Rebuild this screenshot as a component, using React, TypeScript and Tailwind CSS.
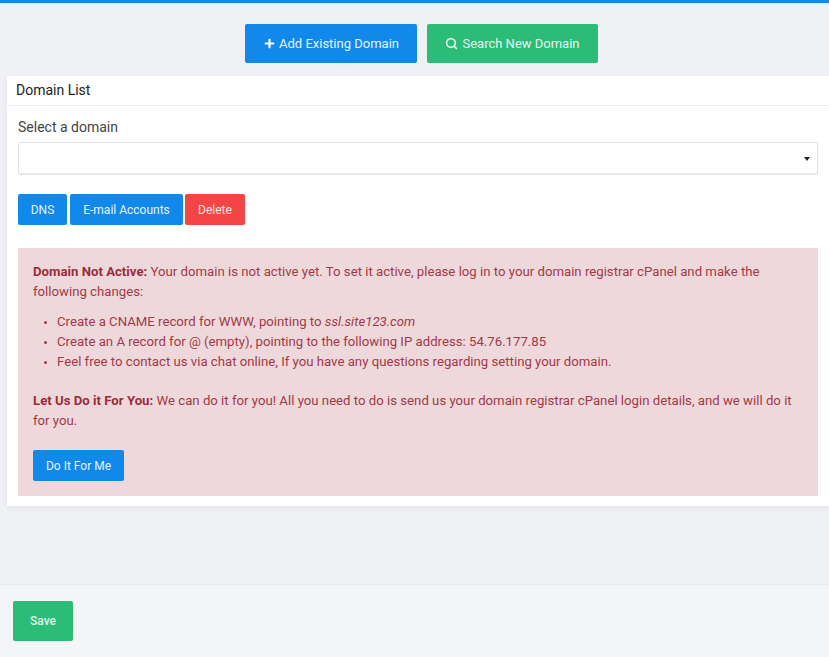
import { Plus, Search } from "lucide-react";

export default function App() {
  return (
    <div className="flex h-[657px] w-[829px] flex-col overflow-hidden bg-[#eff1f4] font-['Roboto',sans-serif] text-[13px]">
      <div className="h-[3px] shrink-0 bg-[#1189e8]" />
      <div className="flex justify-center gap-[10px] pl-[14px] pt-[21px]">
        <button className="flex h-[39px] w-[172px] items-center justify-center gap-[3px] rounded-[2px] bg-[#1089eb] text-[13px] text-[#e6f3fd]">
          <Plus size={13} strokeWidth={4} className="text-white" />
          Add Existing Domain
        </button>
        <button className="flex h-[39px] w-[171px] items-center justify-center gap-[4px] rounded-[2px] bg-[#2dbb78] text-[13px] text-[#e4f7ee]">
          <Search size={13} strokeWidth={3} />
          Search New Domain
        </button>
      </div>
      <div className="ml-[7px] mt-[13px] h-[430px] bg-white shadow-[0_2px_6px_rgba(0,0,0,0.06)]">
        <div className="flex h-[30px] items-center border-b border-[#eceef0] pl-[9px] text-[14px] text-[#222]">
          Domain List
        </div>
        <div className="pl-[11px] pr-[11px] pt-[13px]">
          <div className="text-[14px] leading-[17px] text-[#444]">Select a domain</div>
          <div className="mt-[6px] flex h-[33px] items-center justify-end rounded-[2px] border border-[#dfe1e4] pr-[7px] shadow-[inset_0_-1px_0_#eceef0]">
            <span className="h-0 w-0 border-x-[3px] border-t-[4px] border-x-transparent border-t-[#222]" />
          </div>
          <div className="mt-[19px] flex gap-[3px]">
            <button className="h-[31px] w-[49px] rounded-[2px] bg-[#1089eb] pt-[1px] text-[12px] text-[#e6f3fd]">DNS</button>
            <button className="h-[31px] w-[113px] rounded-[2px] bg-[#1089eb] pt-[1px] text-[12px] text-[#e6f3fd]">E-mail Accounts</button>
            <button className="-ml-[1px] h-[31px] w-[60px] rounded-[2px] bg-[#f44545] pt-[1px] text-[12px] text-[#fde5e5]">Delete</button>
          </div>
          <div className="mt-[23px] h-[248px] bg-[#efd8db] px-[15px] pt-[14px] text-[13.2px] leading-[20px] text-[#a13a48]">
            <p className="w-[750px]">
              <b className="font-bold text-[#9a2c3c]">Domain Not Active:</b> Your domain is not active yet. To set it active, please log in to your domain registrar cPanel and make the following changes:
            </p>
            <ul className="mt-[10px] list-disc pl-[24px] leading-[20px] marker:text-[10px]">
              <li>Create a CNAME record for WWW, pointing to <i>ssl.site123.com</i></li>
              <li>Create an A record for @ (empty), pointing to the following IP address: 54.76.177.85</li>
              <li>Feel free to contact us via chat online, If you have any questions regarding setting your domain.</li>
            </ul>
            <p className="mt-[19px] w-[770px]">
              <b className="font-bold text-[#9a2c3c]">Let Us Do it For You:</b> We can do it for you! All you need to do is send us your domain registrar cPanel login details, and we will do it for you.
            </p>
            <button className="mt-[19px] block h-[31px] w-[91px] rounded-[2px] bg-[#1089eb] pt-[1px] text-[12px] text-[#e6f3fd]">Do It For Me</button>
          </div>
        </div>
      </div>
      <div className="mt-[78px] flex h-[73px] items-start border-t border-[#eaebed] bg-[#f4f5f6] pl-[13px] pt-[16px]">
        <button className="h-[40px] w-[60px] rounded-[2px] bg-[#2dbb78] text-[12px] font-medium text-[#dff6ea]">Save</button>
      </div>
    </div>
  );
}
